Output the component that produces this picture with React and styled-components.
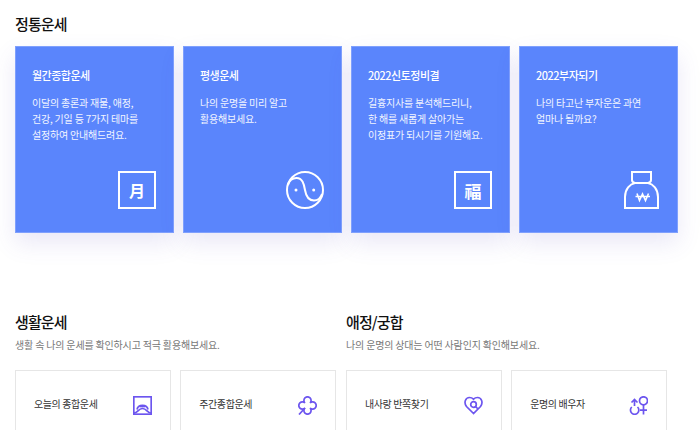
import React from 'react'
import styled, { createGlobalStyle } from 'styled-components'

const GlobalStyle = createGlobalStyle`
  html, body {
    margin: 0;
    padding: 0;
    height: 430px;
    overflow: hidden;
    background: #fff;
    font-family: 'Noto Sans CJK KR', 'Noto Sans', sans-serif;
  }
`

const Page = styled.div`
  width: 700px;
  height: 430px;
  overflow: hidden;
  padding: 13px 0 0 15px;
  box-sizing: border-box;
`

const MainTitle = styled.h2`
  margin: 0;
  font-size: 15px;
  line-height: 21px;
  font-weight: 500;
  color: #111;
  letter-spacing: -0.9px;
`

const BlueRow = styled.div`
  display: flex;
  gap: 9px;
  margin-top: 12px;
`

const BlueCard = styled.div`
  position: relative;
  width: 159px;
  height: 187px;
  box-sizing: border-box;
  padding: 20px 10px 0 16px;
  background: #5a85fc;
  border: 1px solid #7fa0fd;
  box-shadow: 0 10px 22px rgba(90, 80, 190, 0.13);
  color: #fff;
`

const CardTitle = styled.div`
  font-size: 11px;
  line-height: 17px;
  font-weight: 500;
  letter-spacing: -0.5px;
`

const CardText = styled.p`
  margin: 11px 0 0;
  font-size: 10px;
  line-height: 16px;
  font-weight: 400;
  letter-spacing: -0.2px;
  white-space: pre-line;
  color: #f2f5ff;
`

const CardIcon = styled.div`
  position: absolute;
  right: 17px;
  bottom: 23px;
  width: 38px;
  height: 38px;
`

const HanjaBox = styled.div`
  width: 38px;
  height: 38px;
  box-sizing: border-box;
  border: 2px solid #fff;
  display: flex;
  align-items: center;
  justify-content: center;
  font-size: ${props => props.size}px;
  line-height: 1;
  font-weight: 700;
  color: #fff;
`

const LowerRow = styled.div`
  display: flex;
  gap: 10px;
  margin-top: 78px;
`

const Section = styled.section`
  width: 321px;
`

const SectionTitle = styled.h3`
  margin: 0;
  font-size: 15px;
  line-height: 21px;
  font-weight: 500;
  color: #111;
  letter-spacing: -0.9px;
`

const SectionSub = styled.p`
  margin: 5px 0 0;
  font-size: 10px;
  line-height: 15px;
  color: #777;
  letter-spacing: -0.17px;
`

const ItemRow = styled.div`
  display: flex;
  gap: 9.5px;
  margin-top: 18px;
`

const Item = styled.div`
  width: 156px;
  height: 80px;
  box-sizing: border-box;
  border: 1px solid #e6e6e6;
  padding: 21px 18px 0 18px;
  display: flex;
  justify-content: space-between;
  align-items: flex-start;
  background: #fff;
`

const ItemLabel = styled.span`
  font-size: 10px;
  line-height: 24px;
  color: #333;
  letter-spacing: -0.4px;
`

const ItemIcon = styled.svg`
  width: 19px;
  height: 19px;
  margin-top: 4px;
  fill: none;
  stroke: #6c55ef;
  stroke-width: 1.7;
`

function YinYang() {
  return (
    <svg width="38" height="38" viewBox="0 0 38 38" fill="none" stroke="#fff" strokeWidth="2">
      <circle cx="19" cy="19" r="18" />
      <path d="M2 14C3.500 9 7 7 10.500 7C16.500 7 18 13 19 19C20 25 22 29.500 28 29.500C32 29.500 34.500 27 36 23" />
      <circle cx="10" cy="19" r="1.500" fill="#fff" stroke="none" />
      <circle cx="27.700" cy="19" r="1.500" fill="#fff" stroke="none" />
    </svg>
  )
}

function MoneyBag() {
  return (
    <svg width="38" height="38" viewBox="0 0 38 38" fill="none" stroke="#fff" strokeWidth="2">
      <path d="M13 12C11 11.500 10 10.500 10 9V1H29V9C29 10.500 28 11.500 26 12" />
      <path d="M3 37V26C3 18 8 13 13 12H26C31 13 36 18 36 26V37Z" />
      <path d="M15 22.500L17.500 29.500L20.500 23L23.500 29.500L26.500 22.500M13.500 25.500H28" strokeWidth="1.6" />
    </svg>
  )
}

function LandscapeIcon() {
  return (
    <ItemIcon viewBox="0 0 19 19">
      <rect x="0.800" y="0.800" width="17.400" height="17.400" />
      <path d="M4 13.500C5 8 14 8 15 13.500" />
      <path d="M1 17C5 17 5 12.500 9.500 12.500C14 12.500 14 17 18 17" />
      <path d="M6.500 10.500H12.500" />
    </ItemIcon>
  )
}

function CloverIcon() {
  return (
    <ItemIcon viewBox="0 0 19 19">
      <path d="M7 7A3.600 3.600 0 1 1 12 7A3.600 3.600 0 1 1 12 12A3.600 3.600 0 1 1 7 12A3.600 3.600 0 1 1 7 7Z" />
      <path d="M1 18.500L7 12" />
    </ItemIcon>
  )
}

function HeartIcon() {
  return (
    <ItemIcon viewBox="0 0 19 19">
      <path d="M9.500 17.500L2.500 10.500C-0.500 6.500 1.500 1.500 5.500 1.500C7.500 1.500 8.500 2.200 9.500 3.200C10.500 2.200 11.500 1.500 13.500 1.500C17.500 1.500 19.500 6.500 16.500 10.500L9.500 17.500Z" />
      <circle cx="9.500" cy="8.500" r="2.800" />
      <path d="M11.500 10.500L14 13" />
    </ItemIcon>
  )
}

function GenderIcon() {
  return (
    <ItemIcon viewBox="0 0 19 19">
      <path d="M2.800 11A4.200 4.200 0 1 0 8.500 11" />
      <path d="M5.500 10V3.500M2.500 6.500L5.500 3.500L8.500 6.500" />
      <circle cx="14.500" cy="4.800" r="4" />
      <path d="M14.500 8.800V18.500M11 14.200H18" />
    </ItemIcon>
  )
}

const mainCards = [
  {
    title: '월간종합운세',
    text: '이달의 총론과 재물, 애정,\n건강, 기일 등 7가지 테마를\n설정하여 안내해드려요.',
    icon: <HanjaBox size={16}>月</HanjaBox>,
  },
  {
    title: '평생운세',
    text: '나의 운명을 미리 알고\n활용해보세요.',
    icon: <YinYang />,
  },
  {
    title: '2022신토정비결',
    text: '길흉지사를 분석해드리니,\n한 해를 새롭게 살아가는\n이정표가 되시기를 기원해요.',
    icon: <HanjaBox size={17}>福</HanjaBox>,
  },
  {
    title: '2022부자되기',
    text: '나의 타고난 부자운은 과연\n얼마나 될까요?',
    icon: <MoneyBag />,
  },
]

const sections = [
  {
    title: '생활운세',
    sub: '생활 속 나의 운세를 확인하시고 적극 활용해보세요.',
    items: [
      { label: '오늘의 종합운세', icon: <LandscapeIcon /> },
      { label: '주간종합운세', icon: <CloverIcon /> },
    ],
  },
  {
    title: '애정/궁합',
    sub: '나의 운명의 상대는 어떤 사람인지 확인해보세요.',
    items: [
      { label: '내사랑 반쪽찾기', icon: <HeartIcon /> },
      { label: '운명의 배우자', icon: <GenderIcon /> },
    ],
  },
]

export default function App() {
  return (
    <Page>
      <GlobalStyle />
      <MainTitle>정통운세</MainTitle>
      <BlueRow>
        {mainCards.map(card => (
          <BlueCard key={card.title}>
            <CardTitle>{card.title}</CardTitle>
            <CardText>{card.text}</CardText>
            <CardIcon>{card.icon}</CardIcon>
          </BlueCard>
        ))}
      </BlueRow>
      <LowerRow>
        {sections.map(section => (
          <Section key={section.title}>
            <SectionTitle>{section.title}</SectionTitle>
            <SectionSub>{section.sub}</SectionSub>
            <ItemRow>
              {section.items.map(item => (
                <Item key={item.label}>
                  <ItemLabel>{item.label}</ItemLabel>
                  {item.icon}
                </Item>
              ))}
            </ItemRow>
          </Section>
        ))}
      </LowerRow>
    </Page>
  )
}
